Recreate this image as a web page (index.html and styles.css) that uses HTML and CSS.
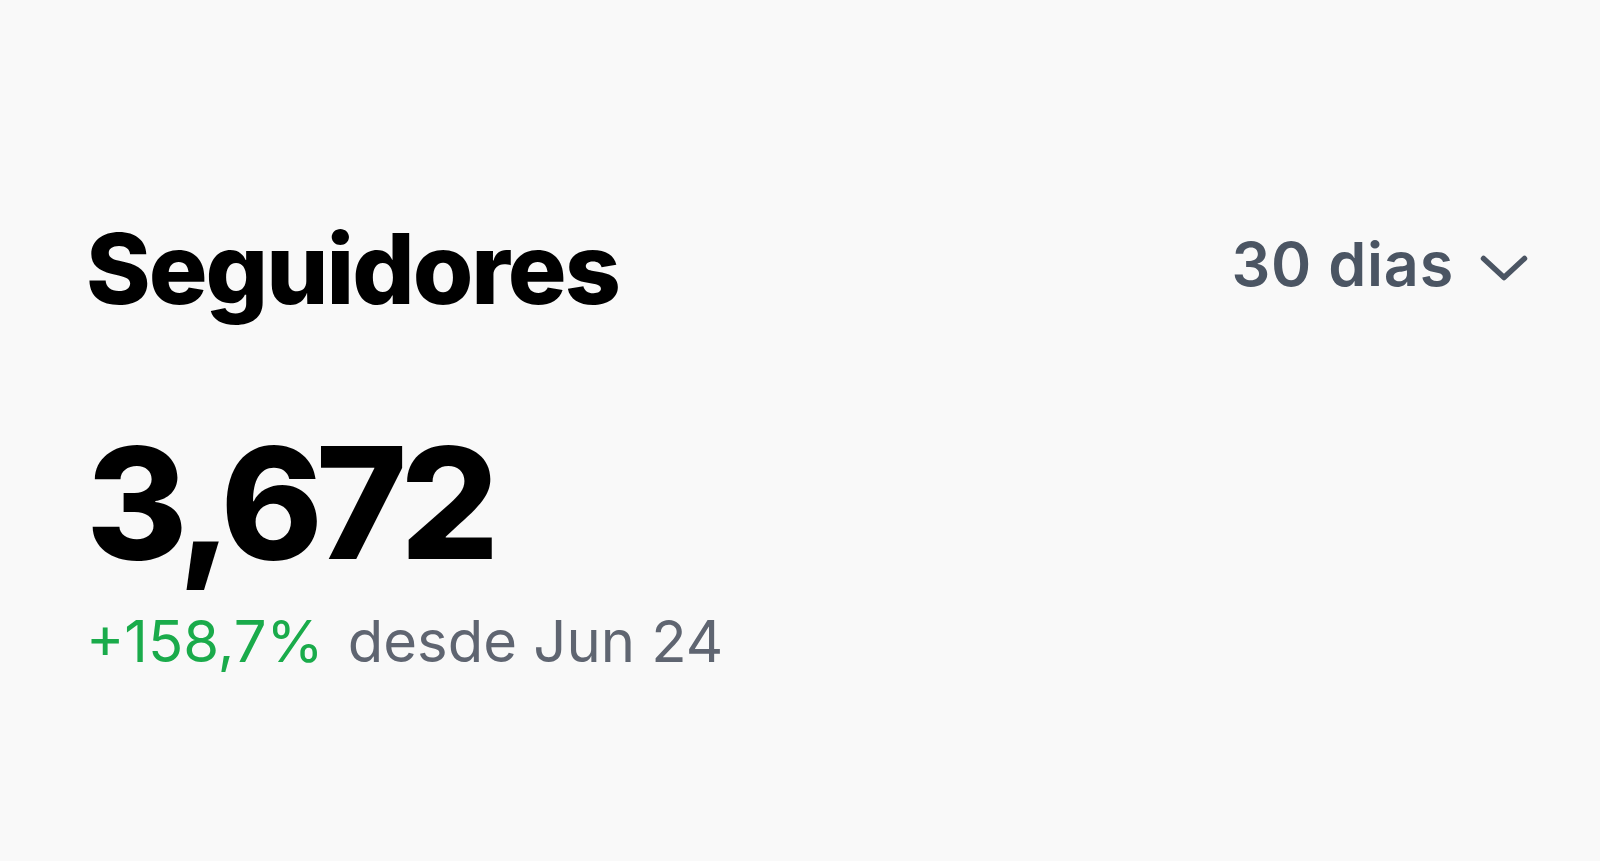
FILE: index.html
```html
<!DOCTYPE html>
<html lang="pt">
<head>
<meta charset="utf-8">
<title>Seguidores</title>
<link rel="stylesheet" href="styles.css">
</head>
<body>
<main class="card">
  <header class="card-head">
    <h1 class="title">Seguidores</h1>
    <button class="range" type="button">
      <span class="range-label">30 dias</span>
      <svg class="chevron" viewBox="0 0 48 26" width="48" height="26" aria-hidden="true">
        <path d="M3.5 3.5 L24 22.5 L44.5 3.5" fill="none" stroke="currentColor" stroke-width="5.5" stroke-linecap="round" stroke-linejoin="round"/>
      </svg>
    </button>
  </header>
  <div class="total">3,672</div>
  <p class="change"><span class="delta">+158,7%</span> <span class="since">desde Jun 24</span></p>
</main>
</body>
</html>
```
FILE: styles.css
```css
html, body {
  margin: 0;
  height: 100%;
  background: #f9f9f9;
}

body {
  font-family: Inter, "Noto Sans", "Liberation Sans", sans-serif;
  color: #000;
}

.card {
  padding: 220px 72px 0 86px;
}

.card-head {
  display: flex;
  justify-content: space-between;
  align-items: center;
}

.title {
  margin: 0;
  font-size: 98px;
  line-height: 1;
  font-weight: 800;
  letter-spacing: -2px;
}

.range {
  display: flex;
  align-items: center;
  gap: 26px;
  padding: 0 0 10px;
  border: 0;
  background: none;
  font: inherit;
  color: #4b5563;
  cursor: pointer;
}

.range-label {
  font-size: 61px;
  line-height: 1;
  font-weight: 600;
  letter-spacing: 0.8px;
}

.chevron {
  display: block;
  margin-top: 7px;
}

.total {
  margin-top: 107px;
  font-size: 155px;
  line-height: 1;
  font-weight: 800;
  letter-spacing: -7px;
}

.change {
  margin: 32px 0 0;
  font-size: 58px;
  line-height: 1;
  font-weight: 400;
}

.delta {
  color: #1aab4b;
}

.since {
  color: #5f6571;
  margin-left: 8px;
}
```
